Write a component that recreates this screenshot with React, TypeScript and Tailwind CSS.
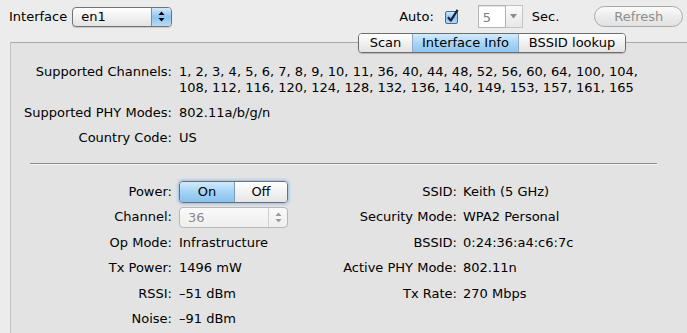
import React from 'react';

const Arrows: React.FC<{ color?: string }> = ({ color = '#000' }) => (
  <svg width="7" height="11" viewBox="0 0 7 11">
    <path d="M3.5 0.5 L6.5 4 L0.5 4 Z" fill={color} />
    <path d="M3.5 10.5 L6.5 7 L0.5 7 Z" fill={color} />
  </svg>
);

const CheckBox: React.FC = () => (
  <svg width="15" height="15" viewBox="0 0 15 15">
    <defs>
      <linearGradient id="cb" x1="0" y1="0" x2="0" y2="1">
        <stop offset="0" stopColor="#d6ebfc" />
        <stop offset="0.5" stopColor="#8ec3ef" />
        <stop offset="1" stopColor="#b8dbf8" />
      </linearGradient>
    </defs>
    <rect x="0.5" y="2.5" width="12" height="12" rx="1.5" fill="url(#cb)" stroke="#4a6a92" />
    <path d="M3 8.2 L5.8 11.6 L12.6 0.8" fill="none" stroke="#15223a" strokeWidth="2.2" strokeLinejoin="round" />
  </svg>
);

const left = [
  ['Power:', null],
  ['Channel:', null],
  ['Op Mode:', 'Infrastructure'],
  ['Tx Power:', '1496 mW'],
  ['RSSI:', '\u201351 dBm'],
  ['Noise:', '\u201391 dBm'],
];

const right = [
  ['SSID:', 'Keith (5 GHz)'],
  ['Security Mode:', 'WPA2 Personal'],
  ['BSSID:', '0:24:36:a4:c6:7c'],
  ['Active PHY Mode:', '802.11n'],
  ['Tx Rate:', '270 Mbps'],
  ['', ''],
];

const App: React.FC = () => {
  return (
    <div className="w-[687px] h-[333px] overflow-hidden bg-[#ececec] text-[13px] text-black font-['Lucida_Grande','DejaVu_Sans',sans-serif]">
      {/* toolbar */}
      <div className="flex items-center h-[33px] pl-[9px]">
        <span>Interface</span>
        <div className="ml-[5px] flex h-[20px] w-[100px] rounded-[4px] border border-[#737373] bg-[linear-gradient(to_bottom,#ffffff,#f1f1f1_50%,#e4e4e4)] shadow-[0_1px_1px_rgba(0,0,0,0.15)] overflow-hidden">
          <span className="flex-1 pl-[8px] leading-[18px]">en1</span>
          <span className="flex w-[20px] items-center justify-center border-l border-[#6d8fbd] bg-[linear-gradient(to_bottom,#d3e9fb,#8fc4f0_50%,#b6dbf8)]">
            <Arrows />
          </span>
        </div>
        <span className="ml-[227px]">Auto:</span>
        <span className="ml-[11px] flex"><CheckBox /></span>
        <div className="ml-[18px] flex h-[23px]">
          <span className="w-[28px] border border-[#b5b5b5] bg-white pl-[4px] text-[#7d7d7d] leading-[23px] shadow-[inset_0_1px_1px_rgba(0,0,0,0.12)]">5</span>
          <span className="flex w-[17px] items-center justify-center border border-l-0 border-[#c3c3c3] bg-[linear-gradient(to_bottom,#fafafa,#e8e8e8)]">
            <svg width="7" height="5" viewBox="0 0 7 5"><path d="M0 0 L7 0 L3.5 4.5 Z" fill="#8a8a8a" /></svg>
          </span>
        </div>
        <span className="ml-[9px]">Sec.</span>
        <button className="ml-[35px] h-[21px] w-[89px] rounded-full border border-[#a9a9a9] bg-[linear-gradient(to_bottom,#fbfbfb,#ececec_50%,#e2e2e2)] text-[#8e8e8e] leading-[19px]">
          Refresh
        </button>
      </div>

      {/* panel */}
      <div className="relative ml-[10px] mt-[9px] h-[300px] border-l border-t border-l-[#c3c3c3] border-t-[#a9a9a9] bg-[#e3e3e3]">
        <div className="absolute left-[347px] top-[-10px] flex h-[20px] rounded-[4px] border border-[#6c6c6c] overflow-hidden leading-[18px] shadow-[0_1px_1px_rgba(0,0,0,0.2)]">
          <span className="w-[53px] text-center bg-[linear-gradient(to_bottom,#ffffff,#f0f0f0_50%,#e3e3e3)]">Scan</span>
          <span className="w-[107px] text-center border-x border-[#8fa9c7] bg-[linear-gradient(to_bottom,#d4ecfc,#a9d5f6_50%,#8ec6f1)]">Interface Info</span>
          <span className="w-[106px] text-center bg-[linear-gradient(to_bottom,#ffffff,#f0f0f0_50%,#e3e3e3)]">BSSID lookup</span>
        </div>

        <div className="grid grid-cols-[161px_1fr] gap-x-[7px] gap-y-[9px] pt-[21px] leading-[16px]">
          <span className="text-right">Supported Channels:</span>
          <span>
            1, 2, 3, 4, 5, 6, 7, 8, 9, 10, 11, 36, 40, 44, 48, 52, 56, 60, 64, 100, 104,
            <br />
            108, 112, 116, 120, 124, 128, 132, 136, 140, 149, 153, 157, 161, 165
          </span>
          <span className="text-right">Supported PHY Modes:</span>
          <span>802.11a/b/g/n</span>
          <span className="text-right">Country Code:</span>
          <span>US</span>
        </div>

        <div className="ml-[19px] mt-[17px] w-[627px] border-t border-b border-t-[#8c8c8c] border-b-[#f4f4f4]" />

        <div className="mt-[14px] grid grid-cols-[161px_129px_156px_1fr] auto-rows-[25.4px] items-center">
          {left.map(([label, value], i) => (
            <React.Fragment key={i}>
              <span className="text-right">{label}</span>
              <div className="pl-[7px]">
                {i === 0 ? (
                  <div className="flex h-[22px] w-[109px] rounded-[4px] border border-[#6f6f6f] overflow-hidden leading-[20px] shadow-[0_0_3px_1px_rgba(80,150,230,0.55)]">
                    <span className="w-[55px] text-center border-r border-[#7c9cc4] bg-[linear-gradient(to_bottom,#d1eafc,#a5d2f5_50%,#86c1f0)]">On</span>
                    <span className="flex-1 text-center bg-[linear-gradient(to_bottom,#ffffff,#f2f2f2_50%,#e6e6e6)]">Off</span>
                  </div>
                ) : i === 1 ? (
                  <div className="flex h-[21px] w-[109px] rounded-[4px] border border-[#b8b8b8] overflow-hidden bg-[linear-gradient(to_bottom,#fafafa,#eeeeee)] text-[#8b8b8b] leading-[19px]">
                    <span className="flex-1 pl-[8px]">36</span>
                    <span className="flex w-[19px] items-center justify-center border-l border-[#cfcfcf]">
                      <Arrows color="#9a9a9a" />
                    </span>
                  </div>
                ) : (
                  <span>{value}</span>
                )}
              </div>
              <span className="text-right">{right[i][0]}</span>
              <span className="pl-[6px]">{right[i][1]}</span>
            </React.Fragment>
          ))}
        </div>
      </div>
    </div>
  );
};

export default App;
